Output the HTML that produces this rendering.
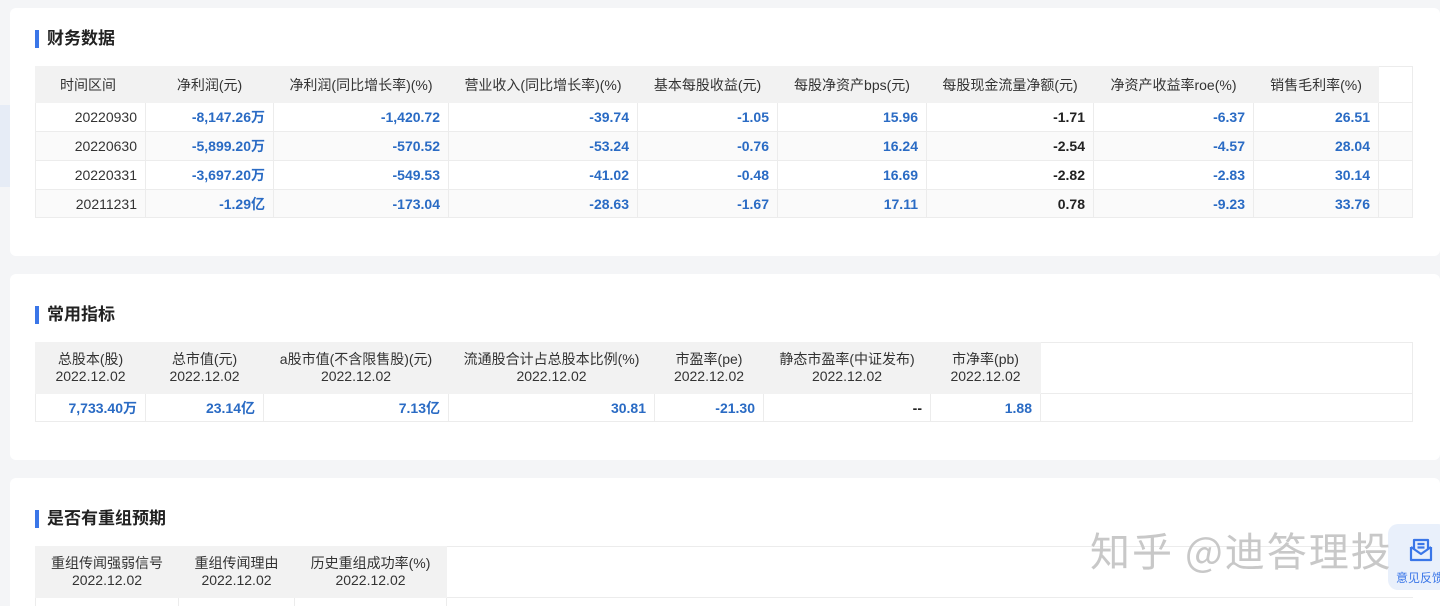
<!DOCTYPE html>
<html style="width:1440px;height:606px;overflow:hidden"><head><meta charset="utf-8"><style>
*{margin:0;padding:0;box-sizing:border-box}
body{width:1440px;height:606px;overflow:hidden;background:#f4f5f7;font-family:"Liberation Sans","Noto Sans CJK SC",sans-serif;position:relative}
.card{position:absolute;left:10px;width:1430px;background:#fff;border-radius:6px}
.title{position:absolute;left:35px;font-size:17px;font-weight:bold;color:#222;padding-left:12px;line-height:20px}
.title:before{content:"";position:absolute;left:0;top:1px;width:4px;height:18px;background:#3a76e8}
table{position:absolute;left:35px;border-collapse:collapse;table-layout:fixed;font-size:14px}
td,th{border:1px solid #ececec;white-space:nowrap;overflow:hidden}
th{background:#f2f2f2;border-color:#f2f2f2;font-weight:normal;color:#333;text-align:center}
td{text-align:right;padding-right:8px;color:#2a6bc4;font-weight:bold}
td.d{color:#333;font-weight:normal}
td.k{color:#222}
tr.a td{background:#fafafa}
.wm{position:absolute;left:1090px;top:520px;font-size:40px;color:#c8c8c8;letter-spacing:2px;font-family:"Noto Sans CJK SC",sans-serif}
.fb{position:absolute;left:1388px;top:524px;width:60px;height:66px;background:#e9f0fb;border-radius:10px}
</style></head><body>
<div style="position:absolute;left:0;top:105px;width:10px;height:82px;background:#e6ecf6"></div>
<div class="card" style="top:8px;height:248px"></div>
<div class="card" style="top:274px;height:186px"></div>
<div class="card" style="top:478px;height:128px;border-radius:6px 6px 0 0"></div>

<div class="title" style="top:29px">财务数据</div>
<table style="top:66px;width:1377px">
<colgroup><col style="width:110px"><col style="width:128px"><col style="width:175px"><col style="width:189px"><col style="width:140px"><col style="width:149px"><col style="width:167px"><col style="width:160px"><col style="width:125px"><col style="width:34px"></colgroup>
<tr style="height:36px"><th style="text-align:left;padding-left:24px">时间区间</th><th>净利润(元)</th><th>净利润(同比增长率)(%)</th><th>营业收入(同比增长率)(%)</th><th>基本每股收益(元)</th><th>每股净资产bps(元)</th><th>每股现金流量净额(元)</th><th>净资产收益率roe(%)</th><th>销售毛利率(%)</th><th style="background:#fff;border-color:#ececec"></th></tr>
<tr style="height:29px"><td class="d">20220930</td><td>-8,147.26万</td><td>-1,420.72</td><td>-39.74</td><td>-1.05</td><td>15.96</td><td class="k">-1.71</td><td>-6.37</td><td>26.51</td><td></td></tr>
<tr class="a" style="height:29px"><td class="d">20220630</td><td>-5,899.20万</td><td>-570.52</td><td>-53.24</td><td>-0.76</td><td>16.24</td><td class="k">-2.54</td><td>-4.57</td><td>28.04</td><td></td></tr>
<tr style="height:29px"><td class="d">20220331</td><td>-3,697.20万</td><td>-549.53</td><td>-41.02</td><td>-0.48</td><td>16.69</td><td class="k">-2.82</td><td>-2.83</td><td>30.14</td><td></td></tr>
<tr class="a" style="height:28px"><td class="d">20211231</td><td>-1.29亿</td><td>-173.04</td><td>-28.63</td><td>-1.67</td><td>17.11</td><td class="k">0.78</td><td>-9.23</td><td>33.76</td><td></td></tr>
</table>

<div class="title" style="top:305px">常用指标</div>
<table style="top:342px;width:1377px">
<colgroup><col style="width:110px"><col style="width:118px"><col style="width:185px"><col style="width:206px"><col style="width:109px"><col style="width:167px"><col style="width:110px"><col style="width:372px"></colgroup>
<tr style="height:51px;line-height:17px"><th>总股本(股)<br>2022.12.02</th><th>总市值(元)<br>2022.12.02</th><th>a股市值(不含限售股)(元)<br>2022.12.02</th><th>流通股合计占总股本比例(%)<br>2022.12.02</th><th>市盈率(pe)<br>2022.12.02</th><th>静态市盈率(中证发布)<br>2022.12.02</th><th>市净率(pb)<br>2022.12.02</th><th style="background:#fff;border-color:#ececec"></th></tr>
<tr style="height:28px"><td>7,733.40万</td><td>23.14亿</td><td>7.13亿</td><td>30.81</td><td>-21.30</td><td class="k">--</td><td>1.88</td><td></td></tr>
</table>

<div class="title" style="top:509px">是否有重组预期</div>
<table style="top:546px;width:1377px">
<colgroup><col style="width:143px"><col style="width:116px"><col style="width:152px"><col style="width:966px"></colgroup>
<tr style="height:51px;line-height:17px"><th>重组传闻强弱信号<br>2022.12.02</th><th>重组传闻理由<br>2022.12.02</th><th>历史重组成功率(%)<br>2022.12.02</th><th style="background:#fff;border-color:#ececec;border-right:none"></th></tr>
<tr style="height:28px"><td></td><td></td><td></td><td style="border-right:none"></td></tr>
</table>

<div class="fb"></div>
<div class="wm">知乎 @迪答理投</div>
<svg style="position:absolute;left:1408px;top:537px" width="26" height="26" viewBox="0 0 26 26" fill="none" stroke="#3a76e8" stroke-width="2.2" stroke-linejoin="round"><path d="M3 10 L3 23 L23 23 L23 10"/><path d="M3 10 L13 17 L23 10"/><path d="M6 12 V3 H20 V12"/><path d="M9.5 7 H16.5 M9.5 10.5 H16.5"/></svg>
<div style="position:absolute;left:1396px;top:569px;font-size:12px;color:#3a76e8;white-space:nowrap">意见反馈</div>
</body></html>
